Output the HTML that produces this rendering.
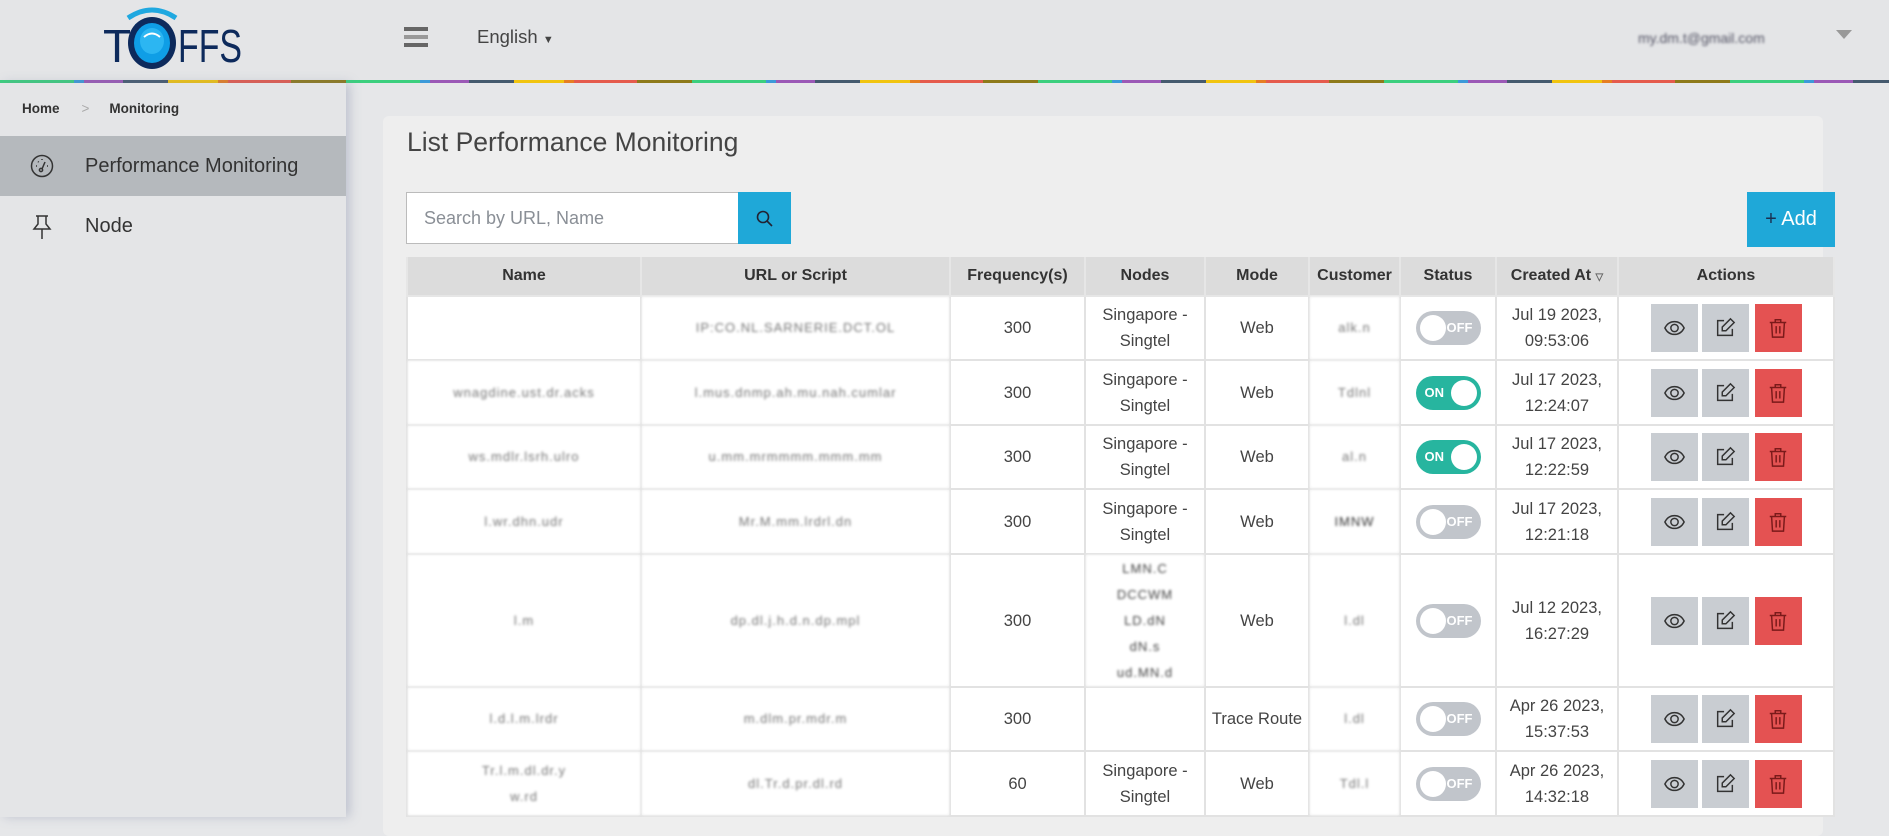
<!DOCTYPE html>
<html><head><meta charset="utf-8">
<style>
*{box-sizing:border-box;margin:0;padding:0}
body{width:1889px;height:817px;overflow:hidden;background:#e6e7e9;font-family:"Liberation Sans",Arial,sans-serif;color:#444;position:relative}
.hdr{position:absolute;left:0;top:0;width:1889px;height:80px;background:#e4e5e7}
.cline{position:absolute;left:0;top:80px;width:1889px;height:3px;background:repeating-linear-gradient(90deg,#3ccf7e 0 74px,#3c9ad9 74px 84px,#9b59b6 84px 123px,#455a6e 123px 168px,#f1c40f 168px 218px,#e67e22 218px 228px,#e55b4d 228px 291px,#8e7a1a 291px 346px)}
.side{position:absolute;left:0;top:83px;width:346px;height:734px;background:#e4e5e7;box-shadow:4px 0 10px rgba(120,130,160,.35);z-index:2}
.bc{position:absolute;left:22px;top:18px;font-size:13.5px;font-weight:bold;color:#333}
.bc span.s{color:#aaa;font-weight:normal;margin:0 20px 0 22px}
.mi{position:absolute;left:0;width:346px;height:60px;font-size:20px;color:#333;line-height:60px}
.mi svg{position:absolute;left:30px;top:18px}
.mi .t{position:absolute;left:85px}
.card{position:absolute;left:383px;top:116px;width:1440px;height:720px;background:#eeeeee;border-radius:6px}
h1{position:absolute;left:407px;top:127px;font-size:26.5px;font-weight:normal;color:#444}
.search{position:absolute;left:406px;top:192px;width:333px;height:52px;background:#fff;border:1px solid #bbb;font-size:18px;color:#8a8f96;padding:15px 0 0 17px}
.sbtn{position:absolute;left:738px;top:192px;width:53px;height:52px;background:#1fa8d8}
.add{position:absolute;left:1747px;top:192px;width:88px;height:55px;background:#1fa8d8;color:#fff;font-size:20px;line-height:55px;text-align:center}
table{position:absolute;left:406px;top:257px;width:1429px;border-collapse:collapse;font-size:16.5px}
th{background:#dcdcdc;height:39px;font-weight:bold;color:#333;border:2px solid #e6e6e6;border-top:none;font-size:16px}
td{background:#fff;border:2px solid #e2e2e2;text-align:center;line-height:26px;color:#444}
.bl{filter:blur(1.3px);color:#777;font-size:13px;letter-spacing:1px}
.tg{display:inline-block;width:65px;height:34px;border-radius:17px;position:relative;vertical-align:middle;font-size:13px;font-weight:bold;color:#fff;line-height:34px}
.off{background:#c1c5cb}.off:before{content:"";position:absolute;left:4px;top:4px;width:26px;height:26px;border-radius:50%;background:#fff}.off span{position:absolute;right:8px}
.on{background:#27b59f}.on:before{content:"";position:absolute;right:4px;top:4px;width:26px;height:26px;border-radius:50%;background:#fff}.on span{position:absolute;left:9px}
.ab{display:inline-block;width:47px;height:48px;background:#c9cdd2;margin:0 2px;vertical-align:middle;position:relative}
.ab svg{position:absolute;left:12px;top:13px}
.ab.d{background:#e45252;margin-left:4px}
</style></head><body>
<div class="hdr">
<svg style="position:absolute;left:100px;top:4px" width="145" height="66" viewBox="0 0 145 66">
<path d="M28 14 Q52 -2 76 14" stroke="#1fa8e0" stroke-width="5" fill="none"/>
<path d="M36 22 Q52 12 68 22" stroke="#1fa8e0" stroke-width="4" fill="none"/>
<text x="3" y="58" font-family="Liberation Sans" font-size="46" fill="#0d2a5c" textLength="24">T</text>
<ellipse cx="52" cy="39" rx="24" ry="26" fill="#0d2a5c"/>
<ellipse cx="52" cy="39" rx="18" ry="20" fill="#0f9ee6"/>
<ellipse cx="52" cy="37" rx="12" ry="13" fill="#2cb6f2"/>
<path d="M44 33 Q52 26 60 33" stroke="#fff" stroke-width="2" fill="none"/>
<text x="78" y="58" font-family="Liberation Sans" font-size="46" fill="#0d2a5c" textLength="64" lengthAdjust="spacingAndGlyphs">FFS</text>
</svg>
<div style="position:absolute;left:404px;top:27px;width:24px;height:4px;background:#666;box-shadow:0 8px 0 #999,0 16px 0 #666"></div>
<div style="position:absolute;left:477px;top:26px;font-size:18.5px;color:#444">English <span style="font-size:11px">▼</span></div>
<div style="position:absolute;left:1638px;top:30px;font-size:14px;color:#556;filter:blur(1.4px)">my.dm.t@gmail.com</div>
<div style="position:absolute;left:1836px;top:30px;width:0;height:0;border-left:8px solid transparent;border-right:8px solid transparent;border-top:9px solid #999"></div>
</div>
<div class="cline"></div>
<div class="side">
<div class="bc">Home<span class="s">&gt;</span>Monitoring</div>
<div class="mi" style="top:53px;background:#b5b9bd"><svg width="24" height="24" viewBox="0 0 24 24" fill="none" stroke="#333" stroke-width="1.5"><circle cx="12" cy="12" r="10.5"/><circle cx="11" cy="16" r="1.6"/><path d="M12 15 L15 8"/><path d="M6 12h1M8 7.5l.7.7M12 5v1M17 12h1"/></svg><span class="t">Performance Monitoring</span></div>
<div class="mi" style="top:113px"><svg width="24" height="26" viewBox="0 0 24 26" fill="none" stroke="#333" stroke-width="1.5"><path d="M6 2h12M8 2v8l-4 5h16l-4-5V2M12 15v10"/></svg><span class="t">Node</span></div>
</div>
<div class="card"></div>
<h1>List Performance Monitoring</h1>
<div class="search">Search by URL, Name</div>
<div class="sbtn"><svg style="position:absolute;left:18px;top:18px" width="17" height="17" viewBox="0 0 17 17" fill="none" stroke="#223" stroke-width="1.6"><circle cx="7" cy="7" r="5.5"/><path d="M11 11l5 5"/></svg></div>
<div class="add"><span style="color:#1a3050">+</span> Add</div>
<table>
<tr><th style="width:234px">Name</th><th style="width:309px">URL or Script</th><th style="width:135px">Frequency(s)</th><th style="width:120px">Nodes</th><th style="width:104px">Mode</th><th style="width:91px">Customer</th><th style="width:96px">Status</th><th style="width:122px">Created At <span style="font-size:10px;color:#666">▽</span></th><th>Actions</th></tr>
<tr style="height:64px"><td></td><td class="bl">IP:CO.NL.SARNERIE.DCT.OL</td><td>300</td><td>Singapore -<br>Singtel</td><td>Web</td><td class="bl">alk.n</td><td><span class="tg off"><span>OFF</span></span></td><td>Jul 19 2023,<br>09:53:06</td><td><span class="ab"><svg width="23" height="22" viewBox="0 0 24 24" fill="none" stroke="#333" stroke-width="1.6"><path d="M1.5 12C4 7 8 5 12 5s8 2 10.5 7c-2.5 5-6.5 7-10.5 7S4 17 1.5 12z"/><circle cx="12" cy="12" r="4"/></svg></span><span class="ab"><svg width="22" height="22" viewBox="0 0 24 24" fill="none" stroke="#333" stroke-width="1.6"><path d="M11 4H4v16h16v-7"/><path d="M18 2l4 4-9 9H9v-4z"/></svg></span><span class="ab d"><svg width="22" height="22" viewBox="0 0 24 24" fill="none" stroke="#7a1a1a" stroke-width="1.6"><path d="M3 6h18M9 6V3h6v3M5 6l1 16h12l1-16M10 10v8M14 10v8"/></svg></span></td></tr>
<tr style="height:65px"><td class="bl">wnagdine.ust.dr.acks</td><td class="bl">l.mus.dnmp.ah.mu.nah.cumlar</td><td>300</td><td>Singapore -<br>Singtel</td><td>Web</td><td class="bl">Tdlnl</td><td><span class="tg on"><span>ON</span></span></td><td>Jul 17 2023,<br>12:24:07</td><td><span class="ab"><svg width="23" height="22" viewBox="0 0 24 24" fill="none" stroke="#333" stroke-width="1.6"><path d="M1.5 12C4 7 8 5 12 5s8 2 10.5 7c-2.5 5-6.5 7-10.5 7S4 17 1.5 12z"/><circle cx="12" cy="12" r="4"/></svg></span><span class="ab"><svg width="22" height="22" viewBox="0 0 24 24" fill="none" stroke="#333" stroke-width="1.6"><path d="M11 4H4v16h16v-7"/><path d="M18 2l4 4-9 9H9v-4z"/></svg></span><span class="ab d"><svg width="22" height="22" viewBox="0 0 24 24" fill="none" stroke="#7a1a1a" stroke-width="1.6"><path d="M3 6h18M9 6V3h6v3M5 6l1 16h12l1-16M10 10v8M14 10v8"/></svg></span></td></tr>
<tr style="height:64px"><td class="bl">ws.mdlr.lsrh.ulro</td><td class="bl">u.mm.mrmmmm.mmm.mm</td><td>300</td><td>Singapore -<br>Singtel</td><td>Web</td><td class="bl">al.n</td><td><span class="tg on"><span>ON</span></span></td><td>Jul 17 2023,<br>12:22:59</td><td><span class="ab"><svg width="23" height="22" viewBox="0 0 24 24" fill="none" stroke="#333" stroke-width="1.6"><path d="M1.5 12C4 7 8 5 12 5s8 2 10.5 7c-2.5 5-6.5 7-10.5 7S4 17 1.5 12z"/><circle cx="12" cy="12" r="4"/></svg></span><span class="ab"><svg width="22" height="22" viewBox="0 0 24 24" fill="none" stroke="#333" stroke-width="1.6"><path d="M11 4H4v16h16v-7"/><path d="M18 2l4 4-9 9H9v-4z"/></svg></span><span class="ab d"><svg width="22" height="22" viewBox="0 0 24 24" fill="none" stroke="#7a1a1a" stroke-width="1.6"><path d="M3 6h18M9 6V3h6v3M5 6l1 16h12l1-16M10 10v8M14 10v8"/></svg></span></td></tr>
<tr style="height:65px"><td class="bl">l.wr.dhn.udr</td><td class="bl">Mr.M.mm.lrdrl.dn</td><td>300</td><td>Singapore -<br>Singtel</td><td>Web</td><td class="bl" style="color:#333">IMNW</td><td><span class="tg off"><span>OFF</span></span></td><td>Jul 17 2023,<br>12:21:18</td><td><span class="ab"><svg width="23" height="22" viewBox="0 0 24 24" fill="none" stroke="#333" stroke-width="1.6"><path d="M1.5 12C4 7 8 5 12 5s8 2 10.5 7c-2.5 5-6.5 7-10.5 7S4 17 1.5 12z"/><circle cx="12" cy="12" r="4"/></svg></span><span class="ab"><svg width="22" height="22" viewBox="0 0 24 24" fill="none" stroke="#333" stroke-width="1.6"><path d="M11 4H4v16h16v-7"/><path d="M18 2l4 4-9 9H9v-4z"/></svg></span><span class="ab d"><svg width="22" height="22" viewBox="0 0 24 24" fill="none" stroke="#7a1a1a" stroke-width="1.6"><path d="M3 6h18M9 6V3h6v3M5 6l1 16h12l1-16M10 10v8M14 10v8"/></svg></span></td></tr>
<tr style="height:133px"><td class="bl">l.m</td><td class="bl">dp.dl.j.h.d.n.dp.mpl</td><td>300</td><td class="bl" style="color:#444">LMN.C<br>DCCWM<br>LD.dN<br>dN.s<br>ud.MN.d</td><td>Web</td><td class="bl">l.dl</td><td><span class="tg off"><span>OFF</span></span></td><td>Jul 12 2023,<br>16:27:29</td><td><span class="ab"><svg width="23" height="22" viewBox="0 0 24 24" fill="none" stroke="#333" stroke-width="1.6"><path d="M1.5 12C4 7 8 5 12 5s8 2 10.5 7c-2.5 5-6.5 7-10.5 7S4 17 1.5 12z"/><circle cx="12" cy="12" r="4"/></svg></span><span class="ab"><svg width="22" height="22" viewBox="0 0 24 24" fill="none" stroke="#333" stroke-width="1.6"><path d="M11 4H4v16h16v-7"/><path d="M18 2l4 4-9 9H9v-4z"/></svg></span><span class="ab d"><svg width="22" height="22" viewBox="0 0 24 24" fill="none" stroke="#7a1a1a" stroke-width="1.6"><path d="M3 6h18M9 6V3h6v3M5 6l1 16h12l1-16M10 10v8M14 10v8"/></svg></span></td></tr>
<tr style="height:64px"><td class="bl">l.d.l.m.lrdr</td><td class="bl">m.dlm.pr.mdr.m</td><td>300</td><td></td><td>Trace Route</td><td class="bl">l.dl</td><td><span class="tg off"><span>OFF</span></span></td><td>Apr 26 2023,<br>15:37:53</td><td><span class="ab"><svg width="23" height="22" viewBox="0 0 24 24" fill="none" stroke="#333" stroke-width="1.6"><path d="M1.5 12C4 7 8 5 12 5s8 2 10.5 7c-2.5 5-6.5 7-10.5 7S4 17 1.5 12z"/><circle cx="12" cy="12" r="4"/></svg></span><span class="ab"><svg width="22" height="22" viewBox="0 0 24 24" fill="none" stroke="#333" stroke-width="1.6"><path d="M11 4H4v16h16v-7"/><path d="M18 2l4 4-9 9H9v-4z"/></svg></span><span class="ab d"><svg width="22" height="22" viewBox="0 0 24 24" fill="none" stroke="#7a1a1a" stroke-width="1.6"><path d="M3 6h18M9 6V3h6v3M5 6l1 16h12l1-16M10 10v8M14 10v8"/></svg></span></td></tr>
<tr style="height:65px"><td class="bl">Tr.l.m.dl.dr.y<br>w.rd</td><td class="bl">dl.Tr.d.pr.dl.rd</td><td>60</td><td>Singapore -<br>Singtel</td><td>Web</td><td class="bl">Tdl.l</td><td><span class="tg off"><span>OFF</span></span></td><td>Apr 26 2023,<br>14:32:18</td><td><span class="ab"><svg width="23" height="22" viewBox="0 0 24 24" fill="none" stroke="#333" stroke-width="1.6"><path d="M1.5 12C4 7 8 5 12 5s8 2 10.5 7c-2.5 5-6.5 7-10.5 7S4 17 1.5 12z"/><circle cx="12" cy="12" r="4"/></svg></span><span class="ab"><svg width="22" height="22" viewBox="0 0 24 24" fill="none" stroke="#333" stroke-width="1.6"><path d="M11 4H4v16h16v-7"/><path d="M18 2l4 4-9 9H9v-4z"/></svg></span><span class="ab d"><svg width="22" height="22" viewBox="0 0 24 24" fill="none" stroke="#7a1a1a" stroke-width="1.6"><path d="M3 6h18M9 6V3h6v3M5 6l1 16h12l1-16M10 10v8M14 10v8"/></svg></span></td></tr>
</table>
</body></html>
